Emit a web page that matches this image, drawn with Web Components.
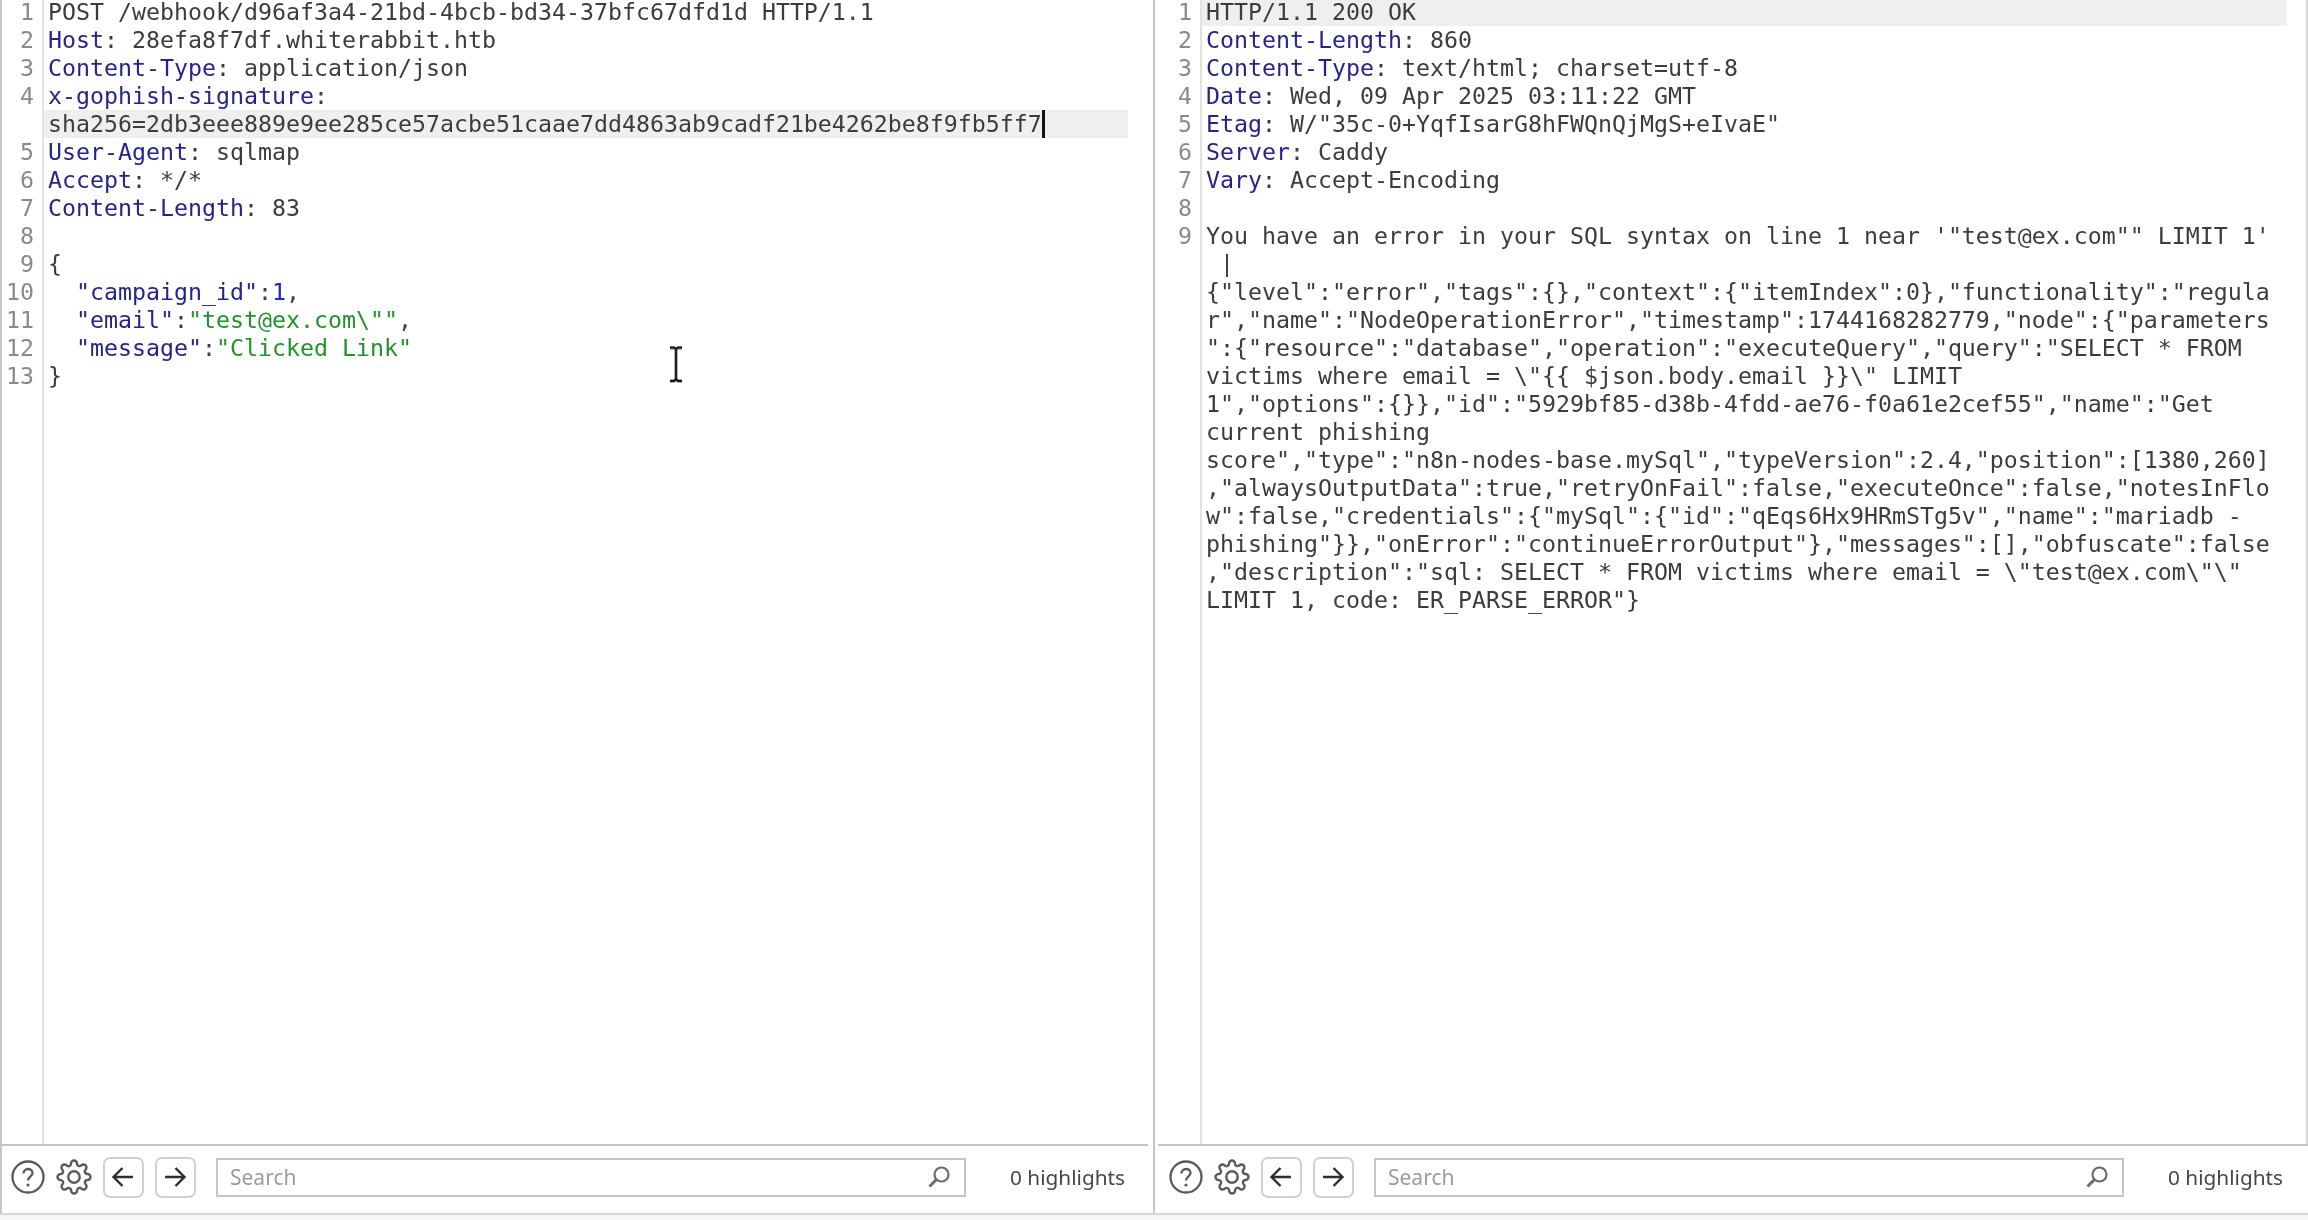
<!DOCTYPE html>
<html>
<head>
<meta charset="utf-8">
<title>Repeater</title>
<style>
  html, body { margin: 0; height: 100%; background: #fff; }
</style>
</head>
<body>
<split-view>
  <message-editor slot="left" gutter="40" data-side="left">
    <code-line num="1">POST /webhook/d96af3a4-21bd-4bcb-bd34-37bfc67dfd1d HTTP/1.1</code-line>
    <code-line num="2"><syn-tok t="key">Host</syn-tok>: 28efa8f7df.whiterabbit.htb</code-line>
    <code-line num="3"><syn-tok t="key">Content-Type</syn-tok>: application/json</code-line>
    <code-line num="4"><syn-tok t="key">x-gophish-signature</syn-tok>:</code-line>
    <code-line active caret>sha256=2db3eee889e9ee285ce57acbe51caae7dd4863ab9cadf21be4262be8f9fb5ff7</code-line>
    <code-line num="5"><syn-tok t="key">User-Agent</syn-tok>: sqlmap</code-line>
    <code-line num="6"><syn-tok t="key">Accept</syn-tok>: */*</code-line>
    <code-line num="7"><syn-tok t="key">Content-Length</syn-tok>: 83</code-line>
    <code-line num="8"></code-line>
    <code-line num="9">{</code-line>
    <code-line num="10">  <syn-tok t="key">"campaign_id"</syn-tok>:<syn-tok t="num">1</syn-tok>,</code-line>
    <code-line num="11">  <syn-tok t="key">"email"</syn-tok>:<syn-tok t="str">"test@ex.com\""</syn-tok>,</code-line>
    <code-line num="12">  <syn-tok t="key">"message"</syn-tok>:<syn-tok t="str">"Clicked Link"</syn-tok></code-line>
    <code-line num="13">}</code-line>
    <text-cursor slot="over"></text-cursor>
  </message-editor>
  <message-editor slot="right" gutter="45" data-side="right">
    <code-line num="1" active>HTTP/1.1 200 OK</code-line>
    <code-line num="2"><syn-tok t="key">Content-Length</syn-tok>: 860</code-line>
    <code-line num="3"><syn-tok t="key">Content-Type</syn-tok>: text/html; charset=utf-8</code-line>
    <code-line num="4"><syn-tok t="key">Date</syn-tok>: Wed, 09 Apr 2025 03:11:22 GMT</code-line>
    <code-line num="5"><syn-tok t="key">Etag</syn-tok>: W/"35c-0+YqfIsarG8hFWQnQjMgS+eIvaE"</code-line>
    <code-line num="6"><syn-tok t="key">Server</syn-tok>: Caddy</code-line>
    <code-line num="7"><syn-tok t="key">Vary</syn-tok>: Accept-Encoding</code-line>
    <code-line num="8"></code-line>
    <code-line num="9">You have an error in your SQL syntax on line 1 near '"test@ex.com"" LIMIT 1'</code-line>
    <code-line> |</code-line>
    <code-line>{"level":"error","tags":{},"context":{"itemIndex":0},"functionality":"regula</code-line>
    <code-line>r","name":"NodeOperationError","timestamp":1744168282779,"node":{"parameters</code-line>
    <code-line>":{"resource":"database","operation":"executeQuery","query":"SELECT * FROM</code-line>
    <code-line>victims where email = \"{{ $json.body.email }}\" LIMIT</code-line>
    <code-line>1","options":{}},"id":"5929bf85-d38b-4fdd-ae76-f0a61e2cef55","name":"Get</code-line>
    <code-line>current phishing</code-line>
    <code-line>score","type":"n8n-nodes-base.mySql","typeVersion":2.4,"position":[1380,260]</code-line>
    <code-line>,"alwaysOutputData":true,"retryOnFail":false,"executeOnce":false,"notesInFlo</code-line>
    <code-line>w":false,"credentials":{"mySql":{"id":"qEqs6Hx9HRmSTg5v","name":"mariadb -</code-line>
    <code-line>phishing"}},"onError":"continueErrorOutput"},"messages":[],"obfuscate":false</code-line>
    <code-line>,"description":"sql: SELECT * FROM victims where email = \"test@ex.com\"\"</code-line>
    <code-line>LIMIT 1, code: ER_PARSE_ERROR"}</code-line>
  </message-editor>
</split-view>

<script>
  /******************** Split view ********************/
  class SplitView extends HTMLElement {
    constructor(){
      super();
      this.attachShadow({mode: 'open'});
      this.shadowRoot.innerHTML = `
      <style>
        :host {
          display: flex;
          flex-direction: column;
          height: 1220px;
          overflow: hidden;
          filter: blur(0.45px);
        }
        .panes {
          display: flex;
          flex: none;
          height: 1213px;
          border-left: 2px solid #c8c4c4;
          box-sizing: border-box;
        }
        .divider {
          flex: none;
          width: 2px;
          background: #c8c4c4;
        }
        .strip {
          flex: 1;
          border-top: 2px solid #d8d5d5;
          background: #f6f6f6;
        }
      </style>
      <div class="panes">
        <slot name="left"></slot>
        <div class="divider"></div>
        <slot name="right"></slot>
      </div>
      <div class="strip"></div>`;
    }
  }

  /******************** Editor pane ********************/
  class MessageEditor extends HTMLElement {
    constructor(){
      super();
      this.attachShadow({mode: 'open'});
    }

    connectedCallback(){
      const gutter = this.getAttribute('gutter');
      const side = this.dataset.side;
      this.shadowRoot.innerHTML = `
      <style>
        :host {
          --gutter: ${gutter}px;
          position: relative;
          display: flex;
          flex-direction: column;
          width: ${side === 'left' ? 1151 : 1153}px;
          flex: none;
          height: 100%;
          font-family: "DejaVu Sans Mono", monospace;
          font-size: 23.25px;
          color: #3c3c3c;
        }
        .code {
          flex: 1;
          min-height: 0;
          overflow: hidden;
          padding-right: ${side === 'left' ? 25 : 19}px;
          ${side === 'right' ? 'border-right: 2px solid #d8d5d5;' : ''}
          background: linear-gradient(#e3e1e1, #e3e1e1) no-repeat var(--gutter) 0 / 2px 100%;
        }
      </style>
      <div class="code"><slot></slot></div>
      <slot name="over"></slot>
      <find-bar data-side="${side}"></find-bar>`;
    }
  }

  /******************** One row of text ********************/
  class CodeLine extends HTMLElement {
    constructor(){
      super();
      this.attachShadow({mode: 'open'});
    }

    connectedCallback(){
      const num = this.getAttribute('num') || '';
      const caret = this.hasAttribute('caret') ? '<span class="caret"></span>' : '';
      this.shadowRoot.innerHTML = `
      <style>
        :host {
          display: grid;
          grid-template-columns: var(--gutter) 1fr;
          height: 28px;
          line-height: 28px;
        }
        /* first row sits two pixels short against the top edge */
        :host(:first-child) {
          height: 26px;
          line-height: 24px;
        }
        .num {
          padding-right: 8px;
          text-align: right;
          color: #8a8a8a;
        }
        .text {
          padding-left: 4px;
          margin-left: 2px;
          white-space: pre;
        }
        :host([active]) .text {
          background: #efefef;
        }
        .caret {
          display: inline-block;
          width: 3px;
          height: 28px;
          background: #111;
          vertical-align: top;
        }
      </style>
      <div class="num">${num}</div>
      <div class="text"><slot></slot>${caret}</div>`;
    }
  }

  /******************** Syntax colours ********************/
  class SynTok extends HTMLElement {
    constructor(){
      super();
      this.attachShadow({mode: 'open'});
      this.shadowRoot.innerHTML = `<style>
        :host { display: inline; }
        :host([t="key"]) { color: #24248c; }
        :host([t="str"]) { color: #1f9428; }
        :host([t="num"]) { color: #2222d8; }
      </style><slot></slot>`;
    }
  }

  /******************** Mouse I-beam over the text ********************/
  class TextCursor extends HTMLElement {
    constructor(){
      super();
      this.attachShadow({mode: 'open'});
      this.shadowRoot.innerHTML = `
      <style>
        :host {
          position: absolute;
          left: 666px;
          top: 345px;
          width: 16px;
          height: 40px;
        }
        svg { display: block; }
      </style>
      <svg width="16" height="40" viewBox="0 0 16 40" fill="none">
        <path d="M2 3h4l2 1.500 2-1.500h4M8 4.500v30M2 36h4l2-1.500 2 1.500h4" stroke="#9a9a9a" stroke-width="3.500"/>
        <path d="M2 2.500h4l2 1.500 2-1.500h4M8 4v30M2 36h4l2-2 2 2h4" stroke="#111" stroke-width="1.800"/>
      </svg>`;
    }
  }

  /******************** Search bar at the pane foot ********************/
  const findBarTemplate = document.createElement('template');
  findBarTemplate.innerHTML = `
  <style>
    :host {
      display: flex;
      align-items: center;
      flex: none;
      height: 69px;
      box-sizing: border-box;
      padding-bottom: 5px;
      border-top: 2px solid #c8c4c4;
      font-family: "Noto Sans", sans-serif;
      font-size: 21px;
    }
    :host([data-side="left"]) { margin-right: 5px; padding-left: 8px; }
    :host([data-side="right"]) { margin-left: 3px; padding-left: 10px; }
    svg { display: block; flex: none; }
    .gear { margin-left: 9.5px; }
    .nav {
      flex: none;
      display: flex;
      align-items: center;
      justify-content: center;
      width: 41px;
      height: 41px;
      box-sizing: border-box;
      margin-left: 11px;
      border: 2px solid #d2cfcf;
      border-radius: 7px;
    }
    .search {
      flex: none;
      display: flex;
      align-items: center;
      justify-content: space-between;
      width: 750px;
      height: 39px;
      box-sizing: border-box;
      margin-left: 20.5px;
      padding: 0 13px 0 12px;
      border: 2px solid #c8c4c4;
      color: #9b9b9b;
    }
    .count {
      margin-left: 44px;
      white-space: nowrap;
      font-size: 20.8px;
      color: #45454f;
    }
  </style>
  <svg width="36" height="36" viewBox="0 0 36 36" fill="none">
    <circle cx="18" cy="18" r="15.500" stroke="#5a5a5a" stroke-width="2.300"/>
    <path d="M13.500 14.500c0-2.700 2-4.500 4.600-4.500 2.500 0 4.400 1.700 4.400 4 0 3.800-4.500 3.600-4.500 7.500" stroke="#5a5a5a" stroke-width="2.300"/>
    <circle cx="18" cy="26" r="1.600" fill="#5a5a5a"/>
  </svg>
  <svg class="gear" width="36" height="36" viewBox="0 0 24 24" fill="none" stroke="#5a5a5a" stroke-width="1.600">
    <circle cx="12" cy="12" r="3.800"/>
    <path d="M19.400 15a1.650 1.650 0 0 0 .33 1.820l.06.06a2 2 0 0 1 0 2.830 2 2 0 0 1-2.830 0l-.06-.06a1.650 1.650 0 0 0-1.820-.33 1.650 1.650 0 0 0-1 1.510V21a2 2 0 0 1-2 2 2 2 0 0 1-2-2v-.09A1.650 1.650 0 0 0 9 19.400a1.650 1.650 0 0 0-1.820.33l-.06.06a2 2 0 0 1-2.830 0 2 2 0 0 1 0-2.830l.06-.06a1.650 1.650 0 0 0 .33-1.820 1.650 1.650 0 0 0-1.510-1H3a2 2 0 0 1-2-2 2 2 0 0 1 2-2h.09A1.650 1.650 0 0 0 4.600 9a1.650 1.650 0 0 0-.33-1.820l-.06-.06a2 2 0 0 1 0-2.830 2 2 0 0 1 2.830 0l.06.06a1.650 1.650 0 0 0 1.820.33H9a1.650 1.650 0 0 0 1-1.510V3a2 2 0 0 1 2-2 2 2 0 0 1 2 2v.09a1.650 1.650 0 0 0 1 1.510 1.650 1.650 0 0 0 1.820-.33l.06-.06a2 2 0 0 1 2.830 0 2 2 0 0 1 0 2.830l-.06.06a1.650 1.650 0 0 0-.33 1.820V9a1.650 1.650 0 0 0 1.510 1H21a2 2 0 0 1 2 2 2 2 0 0 1-2 2h-.09a1.650 1.650 0 0 0-1.510 1z"/>
  </svg>
  <div class="nav">
    <svg width="24" height="22" viewBox="0 0 24 22" fill="none" stroke="#2e2e2e" stroke-width="2.400">
      <path d="M22 11H3M11.500 2L2.500 11l9 9"/>
    </svg>
  </div>
  <div class="nav">
    <svg width="24" height="22" viewBox="0 0 24 22" fill="none" stroke="#2e2e2e" stroke-width="2.400">
      <path d="M2 11h19M12.500 2l9 9-9 9"/>
    </svg>
  </div>
  <div class="search">
    <span>Search</span>
    <svg width="24" height="24" viewBox="0 0 24 24" fill="none">
      <circle cx="14.500" cy="9.500" r="7" stroke="#6c6c6c" stroke-width="2.200"/>
      <path d="M9.500 14.500L2.500 21.500" stroke="#6c6c6c" stroke-width="3"/>
    </svg>
  </div>
  <span class="count">0 highlights</span>`;

  class FindBar extends HTMLElement {
    constructor(){
      super();
      this.attachShadow({mode: 'open'});
      this.shadowRoot.appendChild(findBarTemplate.content.cloneNode(true));
    }
  }

  window.customElements.define('split-view', SplitView);
  window.customElements.define('message-editor', MessageEditor);
  window.customElements.define('code-line', CodeLine);
  window.customElements.define('syn-tok', SynTok);
  window.customElements.define('text-cursor', TextCursor);
  window.customElements.define('find-bar', FindBar);
</script>
</body>
</html>
